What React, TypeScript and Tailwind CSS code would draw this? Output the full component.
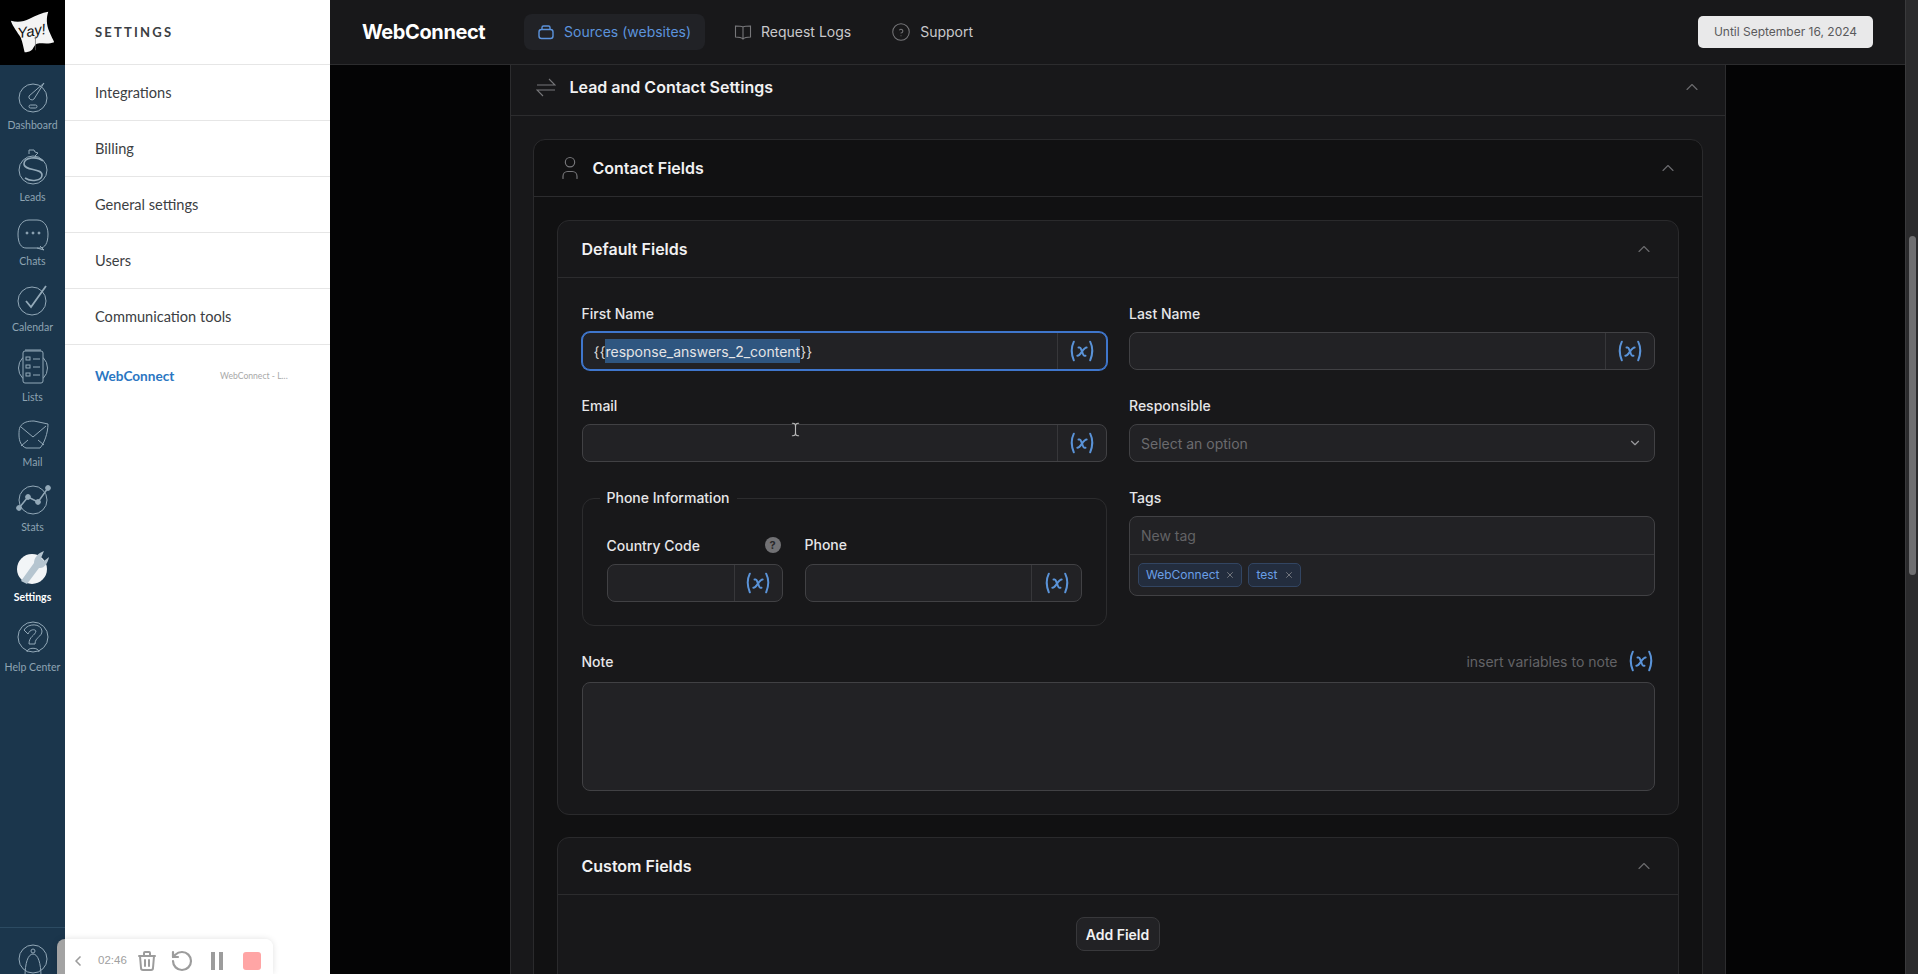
import { ReactNode } from "react";
import { ChevronDown, ChevronLeft, ChevronUp, RotateCcw, TextCursor, X } from "lucide-react";
import { TbHelpCircle, TbTrash, TbUser, TbVariable } from "react-icons/tb";

const stroke = "#93a9b8";

const railIcons: Record<string, ReactNode> = {
  dashboard: (
    <>
      <circle cx="20" cy="20" r="14" />
      <path d="M31 5 L21 21 a3 3 0 0 1 -5 -3 Z" />
      <rect x="16" y="27" width="8" height="3" rx="1.5" />
    </>
  ),
  leads: (
    <>
      <path d="M16 7 V3 h5 l1 2 3 1 -3 3" />
      <circle cx="20" cy="23" r="14" />
      <path d="M30 14 C24 9 11 10 11 17 C11 24 29 21 29 28 C29 34 18 35 12 31" strokeWidth="1.6" />
    </>
  ),
  chats: (
    <>
      <path d="M13 34 H27 C32 34 35 29 35 20 C35 11 30 6 24 6 H16 C10 6 5 11 5 20 C5 29 8 34 13 34 Z" />
      <path d="M24 34 L31 36 L27 32" />
      <circle cx="14" cy="19" r="1" fill={stroke} />
      <circle cx="20" cy="19" r="1" fill={stroke} />
      <circle cx="26" cy="19" r="1" fill={stroke} />
    </>
  ),
  calendar: (
    <>
      <circle cx="19" cy="21" r="14" />
      <path d="M13 21 L18 27 L33 6" strokeWidth="1.8" />
    </>
  ),
  lists: (
    <>
      <circle cx="20" cy="21" r="14.5" />
      <rect x="10" y="4" width="20" height="32" rx="2" fill="#1b364c" />
      <path d="M12 3 H28" />
      <rect x="13" y="10" width="4" height="3" />
      <rect x="13" y="18" width="4" height="3" />
      <rect x="13" y="26" width="4" height="3" />
      <path d="M20 12 H27 M20 20 H27 M20 28 H27" />
    </>
  ),
  mail: (
    <>
      <path d="M7 12 C10 7 15 6 21 6 L35 9 C35 18 31 29 27 33 H13 C8 31 6 26 6 20 C6 17 6 14 7 12 Z" />
      <path d="M8 12 L20 22 L33 11 M8 31 L15 25 M31 30 L25 25" />
    </>
  ),
  stats: (
    <>
      <circle cx="20" cy="20" r="14" />
      <path d="M6 28 L15 17 L25 22 L35 8" strokeWidth="1.5" />
      <circle cx="6" cy="28" r="2.4" fill={stroke} />
      <circle cx="15" cy="17" r="2.4" fill={stroke} />
      <circle cx="25" cy="22" r="2.4" fill={stroke} />
      <circle cx="35" cy="8" r="2.4" fill={stroke} />
    </>
  ),
  help: (
    <>
      <circle cx="20" cy="20" r="15" />
      <path d="M11 13 C15 6 28 6 29 14 C29 20 22 20 22 27 H16 C16 19 22 19 23 14 C22 12 17 12 15 17 Z" />
      <path d="M14 35 C14 30 26 30 26 35" />
    </>
  ),
};

const railItems = [
  { key: "dashboard", label: "Dashboard", box: "h-[66px]", gap: "mb-px" },
  { key: "leads", label: "Leads", box: "h-[72px]", gap: "mb-[4px]" },
  { key: "chats", label: "Chats", box: "h-[64px]", gap: "mb-px" },
  { key: "calendar", label: "Calendar", box: "h-[66px]", gap: "mb-px" },
  { key: "lists", label: "Lists", box: "h-[70px]", gap: "mb-[4px]" },
  { key: "mail", label: "Mail", box: "h-[65px]", gap: "mb-px" },
  { key: "stats", label: "Stats", box: "h-[65px]", gap: "mb-px" },
  { key: "settings", label: "Settings", box: "h-[70px]", gap: "mb-[3px]" },
  { key: "help", label: "Help Center", box: "h-[70px]", gap: "mb-[4px]" },
];

function Logo() {
  return (
    <svg viewBox="0 0 66 66" className="w-[65px] h-[65px]">
      <path
        d="M11 21 C18 23 24 22 30 19 C36 16 43 13 49 12 C47 18 47 25 50 32 C52 37 54 40 55 43 C50 45 44 44 40 44 C36 44 35 47 33 50 C30 53 27 53 25 53 C24 49 23 43 21 38 C18 33 13 27 11 21 Z"
        fill="#f4f4f4"
      />
      <text
        x="18"
        y="37"
        fontFamily="'Liberation Sans', sans-serif"
        fontStyle="italic"
        fontSize="15"
        fill="#111"
        transform="rotate(-9 30 34)"
      >
        Yay!
      </text>
      <path d="M36 37 L36 51" stroke="#666" strokeWidth="0.7" fill="none" />
    </svg>
  );
}

function RailIcon({ name }: { name: string }) {
  if (name === "settings") {
    return (
      <svg viewBox="0 0 40 40" className="w-10 h-10">
        <circle cx="19" cy="21" r="15" fill="#f2f5f7" />
        <path
          d="M8 33 L21 15 C21 10 25 5 31 3 L28 10 L31 13 L36 9 C35 15 31 21 26 20 L14 36 Z"
          fill="#b5c5d0"
        />
      </svg>
    );
  }
  return (
    <svg viewBox="0 0 40 40" fill="none" stroke={stroke} strokeWidth="1" className="w-10 h-10">
      {railIcons[name]}
    </svg>
  );
}

function Rail() {
  return (
    <aside className="w-[65px] flex-none flex flex-col bg-[#1b364c] font-['Lato',sans-serif]">
      <div className="h-[65px] bg-black flex-none">
        <Logo />
      </div>
      {railItems.map((item) => (
        <div key={item.key} className={`${item.box} flex-none flex flex-col items-center justify-end`}>
          <div className={item.gap}>
            <RailIcon name={item.key} />
          </div>
          <span
            className={
              item.key === "settings"
                ? "text-[10.5px] leading-[12px] font-bold text-white"
                : "text-[10.5px] leading-[12px] text-[#8ea4b3]"
            }
          >
            {item.label}
          </span>
        </div>
      ))}
      <div className="mt-auto h-[47px] flex-none border-t border-[#2c4b62] flex justify-center pt-[15px] overflow-hidden">
        <svg viewBox="0 0 30 40" fill="none" stroke={stroke} className="w-[30px] h-[40px] flex-none">
          <circle cx="15" cy="16" r="14" />
          <circle cx="15" cy="8" r="2" />
          <path d="M7 34 C7 20 10 11 15 11 C20 11 23 20 23 34" />
        </svg>
      </div>
    </aside>
  );
}

function SettingsMenu() {
  const rows = ["Integrations", "Billing", "General settings", "Users", "Communication tools"];
  return (
    <nav className="w-[265px] flex-none bg-white font-['Lato',sans-serif] text-[#3c4043]">
      <div className="h-[65px] flex items-center pl-[30px] pt-px border-b border-[#e6e6e6] text-[13px] font-bold tracking-[2.2px]">
        SETTINGS
      </div>
      {rows.map((row) => (
        <div key={row} className="h-[56px] flex items-center pl-[30px] border-b border-[#e6e6e6] text-[14.6px]">
          {row}
        </div>
      ))}
      <div className="h-[63px] flex items-center pl-[30px]">
        <span className="w-[125px] text-[13.6px] font-bold text-[#2a76c2]">WebConnect</span>
        <span className="text-[8.6px] text-[#a8a8a8]">WebConnect - L...</span>
      </div>
    </nav>
  );
}

function Recorder() {
  return (
    <div className="absolute left-[57px] bottom-0 w-[216px] h-[35px] flex rounded-t-lg overflow-hidden shadow-[0_0_6px_rgba(0,0,0,0.12)] font-['Liberation_Sans',sans-serif]">
      <div className="w-[8px] bg-[#a3a3a3]" />
      <div className="flex-1 bg-white flex items-center pt-[9px] text-[#9c9c9c]">
        <ChevronLeft className="w-[16px] h-[16px] ml-[5px]" strokeWidth={2.5} />
        <span className="ml-[12px] text-[11.5px] text-[#a0a0a0]">02:46</span>
        <TbTrash className="w-[24px] h-[24px] ml-[8px]" />
        <RotateCcw className="w-[24px] h-[24px] ml-[11px]" strokeWidth={2.2} />
        <div className="ml-[17px] flex gap-[4px]">
          <div className="w-[4px] h-[18px] bg-[#9c9c9c]" />
          <div className="w-[4px] h-[18px] bg-[#9c9c9c]" />
        </div>
        <div className="ml-[20px] w-[18px] h-[18px] rounded-[3px] bg-[#ffa5a5]" />
      </div>
    </div>
  );
}

function TopBar() {
  return (
    <header className="h-[65px] flex-none flex items-center px-[32px] bg-[#18181a] border-b border-[#2c2c2e]">
      <span className="text-[20px] font-bold text-white w-[162px] tracking-[-0.4px]">WebConnect</span>
      <div className="h-[36px] w-[181px] flex items-center pl-[13px] gap-[9px] rounded-lg bg-[#212226] text-[14px] text-[#5c93dc]">
        <svg viewBox="0 0 18 18" fill="none" stroke="currentColor" strokeWidth="1.4" className="w-[18px] h-[18px]">
          <path d="M5 6 V4.5 C5 3.5 5.5 3 6.5 3 H11.5 C12.5 3 13 3.5 13 4.5 V6" />
          <rect x="2" y="6.5" width="14" height="9" rx="2.5" />
        </svg>
        <span className="mb-px">Sources (websites)</span>
      </div>
      <div className="ml-[29px] flex items-center gap-[9px] text-[14px] text-[#c9c9cc]">
        <svg viewBox="0 0 18 18" fill="none" stroke="#77777a" strokeWidth="1.1" className="w-[18px] h-[18px]">
          <path d="M9 4 C7 3 4 3 1.5 3 V14 C4 14 7 14 9 16 C11 14 14 14 16.5 14 V3 C14 3 11 3 9 4 Z M9 4 V16" />
        </svg>
        <span className="mb-px">Request Logs</span>
      </div>
      <div className="ml-[39px] flex items-center gap-[8px] text-[14px] text-[#c9c9cc]">
        <TbHelpCircle className="w-[22px] h-[22px] text-[#77777a]" strokeWidth={1.1} />
        <span className="mb-px">Support</span>
      </div>
      <div className="ml-auto w-[175px] h-[32px] flex items-center justify-center rounded-[5px] bg-[#e9e9ea] text-[12px] text-[#5a5a5c]">
        Until September 16, 2024
      </div>
    </header>
  );
}

function SectionHeader({ title, icon, lead }: { title: string; icon?: ReactNode; lead?: boolean }) {
  return (
    <div
      className={`${lead ? "h-[51px] pb-[7px]" : "h-[57px]"} flex items-center pl-[24px] pr-[23px] border-b border-[#2c2c2e]`}
    >
      {icon}
      <span className="text-[16px] font-semibold text-[#f1f1f2]">{title}</span>
      <ChevronUp
        className={`${lead ? "" : "mr-px"} ml-auto w-[20px] h-[20px] text-[#6a6a6d]`}
        strokeWidth={1.4}
      />
    </div>
  );
}

function VarIcon() {
  return <TbVariable className="w-[28px] h-[28px] text-[#5a93d8]" strokeWidth={1.7} />;
}

function Field({ label, value, focused }: { label: string; value?: ReactNode; focused?: boolean }) {
  return (
    <div>
      <div className="h-[20px] mb-[8px] text-[14px] leading-[20px] font-medium text-[#e6e6e8]">{label}</div>
      <VarInput value={value} focused={focused} addon="w-[49px]" />
    </div>
  );
}

function VarInput({ value, focused, addon }: { value?: ReactNode; focused?: boolean; addon: string }) {
  return (
    <div
      className={
        focused
          ? "h-[38px] flex rounded-lg bg-[#222225] border border-[#3f76cc] ring-1 ring-[#3f76cc]"
          : "h-[38px] flex rounded-lg bg-[#222225] border border-[#414144]"
      }
    >
      <div className="flex-1 min-w-0 flex items-center pl-[11px] text-[14px] text-[#d8d8da]">{value}</div>
      <div className={`${addon} flex-none flex items-center justify-center border-l border-[#37373a]`}>
        <VarIcon />
      </div>
    </div>
  );
}

function Chip({ label }: { label: string }) {
  return (
    <div className="h-[24px] flex items-center gap-[6px] pl-[7px] pr-[6px] rounded-[5px] bg-[#232d3e] border border-[#324562] text-[12px] text-[#6a9fe6]">
      {label}
      <X className="w-[10px] h-[10px] text-[#9a9a9d]" strokeWidth={1.6} />
    </div>
  );
}

function DefaultFields() {
  return (
    <section className="rounded-xl border border-[#2a2a2c] bg-[#18181a]">
      <SectionHeader title="Default Fields" />
      <div className="pl-[24px] pr-[23px] pt-[26px] pb-[23px]">
        <div className="grid grid-cols-2 gap-x-[22px] gap-y-[26px]">
          <Field
            label="First Name"
            focused
            value={
              <span className="whitespace-pre">
                {"{{"}
                <span className="bg-[#2f5680] py-[3.5px] text-[#e4e4e6]">response_answers_2_content</span>
                {"}}"}
              </span>
            }
          />
          <Field label="Last Name" />
          <Field label="Email" />
          <div>
            <div className="h-[20px] mb-[8px] text-[14px] leading-[20px] font-medium text-[#e6e6e8]">Responsible</div>
            <div className="h-[38px] flex items-center justify-between pl-[11px] pr-[12px] rounded-lg bg-[#222225] border border-[#414144] text-[14px] text-[#6b6b6e]">
              Select an option
              <ChevronDown className="w-[14px] h-[14px] text-[#9a9a9d]" />
            </div>
          </div>

          <fieldset className="border border-[#2c2c2e] rounded-[12px] px-[24px] pt-[27px] pb-[23px] min-w-0">
            <legend className="-ml-[7px] px-[7px] h-[20px] text-[14px] leading-[20px] font-medium text-[#e6e6e8]">
              Phone Information
            </legend>
            <div className="flex gap-[22px]">
              <div className="w-[176px] flex-none">
                <div className="h-[20px] mb-[9px] flex items-center justify-between text-[14px] font-medium text-[#e6e6e8]">
                  Country Code
                  <span className="w-[16px] h-[16px] mr-[2px] rounded-full bg-[#717174] flex items-center justify-center text-[11px] font-bold text-[#28282a]">
                    ?
                  </span>
                </div>
                <VarInput addon="w-[48px]" />
              </div>
              <div className="flex-1 min-w-0">
                <div className="h-[20px] mb-[9px] text-[14px] leading-[20px] font-medium text-[#e6e6e8]">Phone</div>
                <VarInput addon="w-[50px]" />
              </div>
            </div>
          </fieldset>

          <div>
            <div className="h-[20px] mb-[8px] text-[14px] leading-[20px] font-medium text-[#e6e6e8]">Tags</div>
            <div className="rounded-lg bg-[#222225] border border-[#414144]">
              <div className="h-[38px] flex items-center px-[11px] border-b border-[#37373a] text-[14px] text-[#636366]">
                New tag
              </div>
              <div className="h-[40px] flex items-center gap-[6px] pl-[8px]">
                <Chip label="WebConnect" />
                <Chip label="test" />
              </div>
            </div>
          </div>
        </div>

        <div className="mt-[25px] h-[20px] mb-[11px] flex items-center text-[14px] font-medium text-[#e6e6e8]">
          Note
          <span className="ml-auto mr-[9px] text-[14px] font-normal text-[#636366]">insert variables to note</span>
          <VarIcon />
        </div>
        <div className="h-[109px] rounded-lg bg-[#222225] border border-[#414144]" />
      </div>
    </section>
  );
}

function CustomFields() {
  return (
    <section className="mt-[22px] rounded-xl border border-[#2a2a2c] bg-[#18181a]">
      <SectionHeader title="Custom Fields" />
      <div className="flex justify-center pt-[22px] pb-[40px]">
        <div className="w-[84px] h-[34px] flex items-center justify-center rounded-lg bg-[#222225] border border-[#38383b] text-[14px] font-semibold text-[#f1f1f2]">
          Add Field
        </div>
      </div>
    </section>
  );
}

function LeadSettings() {
  return (
    <div className="w-[1216px] mx-auto bg-[#18181a] border-x border-[#2c2c2e]">
      <SectionHeader
        lead
        title="Lead and Contact Settings"
        icon={
          <svg viewBox="0 0 20 20" fill="none" stroke="#77777a" strokeWidth="1.1" className="w-[20px] h-[20px] ml-px mr-[14px]">
            <path d="M1 8 H19 L13 2" />
            <path d="M19 13 H1 L7 19" />
          </svg>
        }
      />
      <div className="px-[22px] pt-[23px]">
        <section className="rounded-t-xl border border-[#2a2a2c] bg-[#111112]">
          <SectionHeader
            title="Contact Fields"
            icon={<TbUser className="w-[28px] h-[28px] -ml-[2px] mr-[9px] text-[#77777a]" strokeWidth={1} />}
          />
          <div className="px-[23px] pt-[23px]">
            <DefaultFields />
            <CustomFields />
          </div>
        </section>
      </div>
    </div>
  );
}

export default function App() {
  return (
    <div className="relative h-screen flex overflow-hidden bg-[#040405] font-['Inter',sans-serif]">
      <Rail />
      <SettingsMenu />
      <main className="flex-1 min-w-0 flex flex-col">
        <TopBar />
        <div className="flex-1 min-h-0 overflow-hidden">
          <LeadSettings />
        </div>
      </main>
      <div className="w-[13px] flex-none bg-[#2b2b2d] border-l border-[#3a3a3c] pl-[3px] pr-[2px]">
        <div className="mt-[236px] h-[339px] rounded-full bg-[#6f6f71]" />
      </div>
      <Recorder />
      <TextCursor className="absolute left-[788px] top-[421px] w-[15px] h-[17px] text-[#bbbbbb]" strokeWidth={1.8} />
    </div>
  );
}
